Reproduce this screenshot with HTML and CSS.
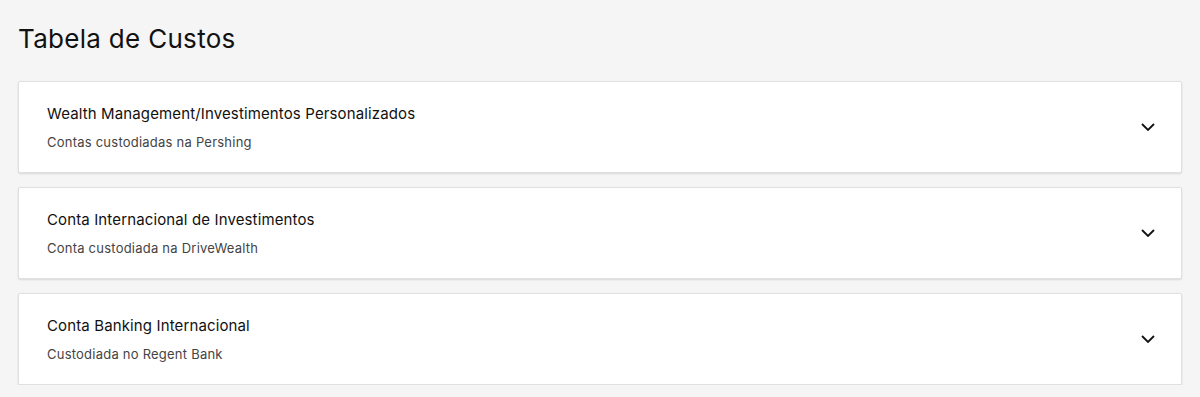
FILE: index.html
```html
<!DOCTYPE html>
<html lang="pt">
<head>
<meta charset="utf-8">
<link rel="stylesheet" href="styles.css">
</head>
<body>
<main class="page">
  <h1 class="page-title">Tabela de Custos</h1>
  <div class="list">
    <div class="card">
      <div class="card-text">
        <div class="card-title">Wealth Management/Investimentos Personalizados</div>
        <div class="card-sub">Contas custodiadas na Pershing</div>
      </div>
      <svg class="chev" width="14" height="8" viewBox="0 0 14 8"><path d="M1 1l6 6 6-6" fill="none" stroke="#111" stroke-width="1.8"/></svg>
    </div>
    <div class="card">
      <div class="card-text">
        <div class="card-title">Conta Internacional de Investimentos</div>
        <div class="card-sub">Conta custodiada na DriveWealth</div>
      </div>
      <svg class="chev" width="14" height="8" viewBox="0 0 14 8"><path d="M1 1l6 6 6-6" fill="none" stroke="#111" stroke-width="1.8"/></svg>
    </div>
    <div class="card">
      <div class="card-text">
        <div class="card-title">Conta Banking Internacional</div>
        <div class="card-sub">Custodiada no Regent Bank</div>
      </div>
      <svg class="chev" width="14" height="8" viewBox="0 0 14 8"><path d="M1 1l6 6 6-6" fill="none" stroke="#111" stroke-width="1.8"/></svg>
    </div>
  </div>
</main>
</body>
</html>
```
FILE: styles.css
```css
html, body {
  margin: 0;
  padding: 0;
  background: #f5f5f5;
}
body {
  font-family: "Inter", "Liberation Sans", sans-serif;
  color: #111;
}
.page {
  padding: 24px 18px 0 18px;
}
.page-title {
  margin: 0 0 27px 0;
  font-size: 26px;
  font-weight: 400;
  line-height: 30px;
  letter-spacing: 0.3px;
}
.list {
  display: flex;
  flex-direction: column;
  gap: 14px;
}
.card {
  height: 92px;
  box-sizing: border-box;
  background: #fff;
  border: 1px solid #e0e0e0;
  border-radius: 2px;
  box-shadow: 0 1px 2px rgba(0,0,0,0.12);
  display: flex;
  align-items: center;
  justify-content: space-between;
  padding: 0 26px 0 28px;
}
.card-text {
  display: flex;
  flex-direction: column;
  gap: 11px;
}
.card-title {
  font-size: 15px;
  line-height: 18px;
  letter-spacing: 0.13px;
  color: #111;
}
.card-sub {
  font-size: 13px;
  line-height: 16px;
  letter-spacing: 0.23px;
  color: #444;
}
.chev {
  display: block;
}
```
